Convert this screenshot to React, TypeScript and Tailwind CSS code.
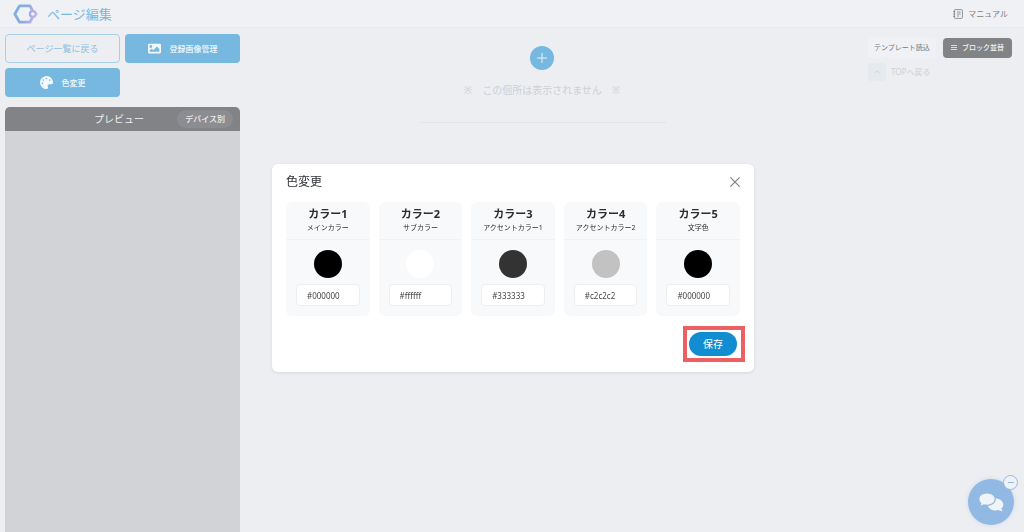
import { useState } from 'react';
import { FaImage, FaPalette } from 'react-icons/fa';

type ThemeColor = {
  id: string;
  title: string;
  label: string;
  value: string;
};

const initialColors: ThemeColor[] = [
  { id: 'color1', title: 'カラー1', label: 'メインカラー', value: '#000000' },
  { id: 'color2', title: 'カラー2', label: 'サブカラー', value: '#ffffff' },
  { id: 'color3', title: 'カラー3', label: 'アクセントカラー1', value: '#333333' },
  { id: 'color4', title: 'カラー4', label: 'アクセントカラー2', value: '#c2c2c2' },
  { id: 'color5', title: 'カラー5', label: '文字色', value: '#000000' },
];

const Logo = () => (
  <svg viewBox="0 0 25 20" className="h-5 w-[25px]" fill="none" aria-hidden="true">
    <defs>
      <linearGradient id="logo" x1="0" y1="0" x2="25" y2="8" gradientUnits="userSpaceOnUse">
        <stop offset="0" stopColor="#73b5e2" />
        <stop offset="0.55" stopColor="#8fa9df" />
        <stop offset="1" stopColor="#c5b2ee" />
      </linearGradient>
    </defs>
    <path
      d="M19.6 6.6L16.9 1.8H6.6L1.8 10l4.8 8.2h10.3l2.7-4.8"
      stroke="url(#logo)"
      strokeWidth="2.8"
      strokeLinejoin="round"
    />
    <circle cx="19.8" cy="10" r="2.9" stroke="url(#logo)" strokeWidth="2.2" />
    <path d="M23 8.2l1.4 1.8-1.4 1.8" stroke="#c5b2ee" strokeWidth="1" />
  </svg>
);

const Header = () => (
  <header className="flex h-7 items-center justify-between border-b border-[#e8eaee] bg-[#eff1f5] pr-4 pl-[13px]">
    <div className="flex items-center gap-[9px]">
      <Logo />
      <h1 className="text-[13px] leading-5 text-[#78b8df]">ページ編集</h1>
    </div>
    <a href="#manual" className="flex items-center gap-[5px] text-[8px] leading-3 text-[#7c7e82]">
      <svg viewBox="0 0 10 10" className="size-[10px]" fill="none" stroke="currentColor" strokeWidth="0.8" aria-hidden="true">
        <rect x="1.4" y="0.6" width="8" height="8.8" rx="0.8" />
        <path d="M0.2 2.6h2M0.2 5h2M0.2 7.4h2M4 3h3.6M4 5h3.6M4 7h2" />
      </svg>
      マニュアル
    </a>
  </header>
);

const Sidebar = () => (
  <aside className="flex w-[235px] shrink-0 flex-col gap-[10px]">
    <div className="grid grid-cols-2 gap-[5px] text-[8px] leading-3">
      <button className="h-[29px] rounded border border-[#a9cfe8] text-[9px] text-[#8fc0e0]">ページ一覧に戻る</button>
      <button className="flex h-[29px] items-center justify-center gap-[9px] rounded bg-[#76b8df] font-medium text-[#f2f7fb]">
        <FaImage className="size-[13px]" />
        登録画像管理
      </button>
      <button className="flex h-[29px] items-center justify-center gap-[9px] rounded bg-[#76b8df] font-medium text-[#f2f7fb]">
        <FaPalette className="size-[13px]" />
        色変更
      </button>
    </div>
    <section className="flex flex-1 flex-col overflow-hidden rounded-t-[5px] bg-[#d2d3d6]">
      <div className="grid h-6 grid-cols-[1fr_auto_1fr] items-center bg-[#828386] pr-[7px] text-[#eeeff1]">
        <h2 className="col-start-2 text-[10px] leading-4">プレビュー</h2>
        <button className="h-[18px] justify-self-end rounded-full bg-[#8c8d90] px-2 text-[8px] font-medium">デバイス別</button>
      </div>
    </section>
  </aside>
);

const Canvas = () => (
  <main className="flex flex-1 flex-col items-center pt-3">
    <button aria-label="ブロックを追加" className="flex size-6 items-center justify-center rounded-full bg-[#76b8df] text-[#e9f3fa]">
      <svg viewBox="0 0 10 10" className="size-[10px]" stroke="currentColor" strokeWidth="1" aria-hidden="true">
        <path d="M5 0v10M0 5h10" />
      </svg>
    </button>
    <p className="mt-3 text-[10px] leading-4 text-[#cdd0d4]">※　この個所は表示されません　※</p>
    <hr className="mt-6 w-[247px] border-[#e1e4e8]" />
  </main>
);

const Actions = () => (
  <div className="flex w-[180px] shrink-0 flex-col gap-[5px] pt-1 pr-3 pl-6">
    <div className="flex items-center justify-between text-[7px] leading-3">
      <button className="h-5 rounded bg-[#eff1f4] px-[6px] text-[#75777b]">テンプレート読込</button>
      <button className="flex h-5 items-center gap-[5px] rounded bg-[#828386] px-2 font-medium text-[#f1f2f4]">
        <svg viewBox="0 0 6 6" className="size-[6px]" stroke="currentColor" strokeWidth="0.8" aria-hidden="true">
          <path d="M0 0.5h6M0 2.5h6M0 4.5h6" />
        </svg>
        ブロック並替
      </button>
    </div>
    <a href="#top" className="flex items-center gap-[5px] text-[8px] leading-3 text-[#ced1d4]">
      <span className="flex size-[18px] items-center justify-center rounded-xs bg-[#e5eaee]">
        <svg viewBox="0 0 8 8" className="size-2" fill="none" stroke="currentColor" strokeWidth="0.9" aria-hidden="true">
          <path d="M1.5 5L4 3l2.5 2" />
        </svg>
      </span>
      TOPへ戻る
    </a>
  </div>
);

const ChatButton = () => (
  <div className="fixed right-[10px] bottom-[7px]">
    <button aria-label="チャット" className="flex size-[46px] items-center justify-center rounded-full bg-[#91b9e3] text-[#f0f4f9] shadow-[0_0_4px_#cdd8e5]">
      <svg viewBox="0 0 26 20" className="h-5 w-[26px]" fill="currentColor" aria-hidden="true">
        <path d="M17.5 6.5c4.300 0 7.800 2.700 7.800 6.100 0 1.600-.8 3-2 4.100.2 1 .8 1.800 1.600 2.500-1.700.1-3.200-.3-4.400-1.100-.9.300-1.900.5-3 .5-4.300 0-7.800-2.700-7.800-6s3.500-6.100 7.800-6.100z" />
        <path
          d="M9 .8c4.600 0 8.300 2.800 8.300 6.300s-3.700 6.300-8.300 6.300c-1.100 0-2.200-.2-3.200-.5-1.300.9-2.900 1.300-4.700 1.200.9-.8 1.500-1.700 1.700-2.700C1.500 10.300.7 8.800.7 7.100.7 3.600 4.400.8 9 .8z"
          stroke="#91b9e3"
          strokeWidth="1.200"
        />
      </svg>
    </button>
    <button
      aria-label="閉じる"
      className="absolute -top-1 -right-1 flex size-[15px] items-center justify-center rounded-full border border-[#91b9e3] bg-[#f0f2f6]"
    >
      <span className="h-px w-[6px] bg-[#91b9e3]" />
    </button>
  </div>
);

const ColorCard = ({ color, onChange }: { color: ThemeColor; onChange: (value: string) => void }) => (
  <div className="overflow-hidden rounded-md bg-[#f8f9fa]">
    <label htmlFor={color.id} className="flex h-[38px] flex-col items-center border-b border-[#f1f2f4] pt-1 whitespace-nowrap text-[#2b2d30]">
      <span className="text-[11px] leading-4 font-bold">{color.title}</span>
      <span className="text-[7px] leading-3">{color.label}</span>
    </label>
    <div className="flex flex-col items-center gap-[6px] p-[10px]">
      <span className="size-7 rounded-full" style={{ backgroundColor: color.value }} />
      <input
        id={color.id}
        type="text"
        value={color.value}
        onChange={(e) => onChange(e.target.value)}
        className="h-[22px] w-full rounded border border-[#eceef0] bg-white px-[10px] text-[8px] text-[#45474a]"
      />
    </div>
  </div>
);

const ColorDialog = () => {
  const [colors, setColors] = useState(initialColors);

  const updateColor = (id: string, value: string) => {
    setColors((prev) => prev.map((c) => (c.id === id ? { ...c, value } : c)));
  };

  return (
    <div className="fixed inset-0 flex items-center justify-center pt-1 pl-[2px]">
      <div
        role="dialog"
        aria-labelledby="dialog-title"
        className="w-[482px] rounded-md bg-white px-[14px] pt-2 pb-[10px] shadow-[0_1px_3px_#d5d8dc]"
      >
        <div className="flex h-5 items-center justify-between">
          <h2 id="dialog-title" className="text-[12px] leading-5 text-[#303236]">色変更</h2>
          <button aria-label="閉じる" className="text-[#7b7d80]">
            <svg viewBox="0 0 10 10" className="size-[10px]" stroke="currentColor" strokeWidth="1.1" aria-hidden="true">
              <path d="M0.400 0.400l9.200 9.200M9.600 0.400L0.400 9.600" />
            </svg>
          </button>
        </div>
        <div className="mt-[10px] grid grid-cols-5 gap-[9px]">
          {colors.map((color) => (
            <ColorCard key={color.id} color={color} onChange={(value) => updateColor(color.id, value)} />
          ))}
        </div>
        <div className="mt-[10px] flex justify-end">
          <div className="-mr-[5px] border-4 border-[#ec6064] py-[2px] pr-1 pl-[2px]">
            <button className="block h-6 w-12 rounded-full bg-[#128dd2] text-[10px] leading-4 text-white">保存</button>
          </div>
        </div>
      </div>
    </div>
  );
};

export default function App() {
  return (
    <div
      lang="ja"
      className="flex min-h-screen flex-col bg-[#eceef2] font-['Noto_Sans','Noto_Sans_CJK_JP',sans-serif]"
    >
      <Header />
      <div className="flex flex-1 pt-[6px] pl-[5px]">
        <Sidebar />
        <Canvas />
        <Actions />
      </div>
      <ChatButton />
      <ColorDialog />
    </div>
  );
}
